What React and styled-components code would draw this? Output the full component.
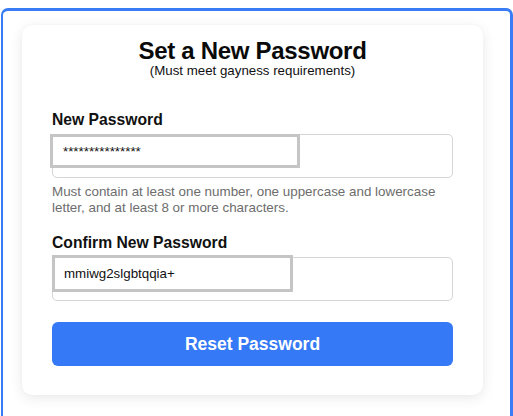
import React from "react";
import styled, { createGlobalStyle } from "styled-components";

const Global = createGlobalStyle`
  html, body {
    margin: 0;
    padding: 0;
    background: #ffffff;
    overflow: hidden;
  }
  body {
    font-family: "Liberation Sans", Arial, Helvetica, sans-serif;
    color: #111;
  }
`;

const Frame = styled.div`
  margin: 8px 0 0 1px;
  width: 512px;
  height: 420px;
  box-sizing: border-box;
  border: 3px solid #3a7cf5;
  border-left-width: 2px;
  border-bottom: none;
  border-radius: 7px 7px 0 0;
  background: #ffffff;
  padding: 14px 0 0 19px;
`;

const Card = styled.div`
  width: 461px;
  box-sizing: border-box;
  background: #ffffff;
  border-radius: 10px;
  box-shadow: 0 3px 14px rgba(0, 0, 0, 0.09), 0 0 3px rgba(0, 0, 0, 0.03);
  padding: 14px 30px 29px 30px;
  display: flex;
  flex-direction: column;
`;

const Title = styled.h1`
  margin: 0;
  text-align: center;
  font-size: 24px;
  line-height: 24px;
  font-weight: 700;
  letter-spacing: -0.3px;
  color: #0a0a0a;
`;

const Subtitle = styled.p`
  margin: 1px 0 0 0;
  text-align: center;
  font-size: 13.3px;
  line-height: 14px;
  color: #111;
`;

const Label = styled.label`
  display: block;
  margin-top: ${(p) => p.$top}px;
  font-size: 15.7px;
  line-height: 18px;
  font-weight: 700;
  color: #111;
`;

const Field = styled.div`
  position: relative;
  margin-top: 5px;
  height: 44px;
  box-sizing: border-box;
  border: 1px solid #d5d5d5;
  border-radius: 5px;
  background: #fff;
`;

const Entry = styled.input`
  position: absolute;
  left: ${(p) => p.$x}px;
  top: ${(p) => p.$y}px;
  width: ${(p) => p.$w}px;
  height: ${(p) => p.$h}px;
  box-sizing: border-box;
  margin: 0;
  border: 3px solid #c5c5c5;
  background: #fff;
  padding: 0 0 0 ${(p) => p.$pad}px;
  font-family: "Liberation Sans", Arial, Helvetica, sans-serif;
  font-size: 13.33px;
  color: #111;
  outline: none;
`;

const Help = styled.p`
  margin: 6px 0 0 0;
  font-size: 13.4px;
  line-height: 15.5px;
  color: #6d6d6d;
`;

const Button = styled.button`
  margin-top: 21px;
  height: 44px;
  border: none;
  border-radius: 6px;
  background: #3579f6;
  color: #ffffff;
  font-family: "Liberation Sans", Arial, Helvetica, sans-serif;
  font-size: 17.5px;
  font-weight: 700;
  cursor: pointer;
`;

export default function App() {
  return (
    <>
      <Global />
      <Frame>
        <Card>
          <Title>Set a New Password</Title>
          <Subtitle>(Must meet gayness requirements)</Subtitle>

          <Label $top={33}>New Password</Label>
          <Field>
            <Entry
              readOnly
              value="***************"
              $x={-3}
              $y={-1}
              $w={250}
              $h={34}
              $pad={10}
            />
          </Field>
          <Help>
            Must contain at least one number, one uppercase and lowercase
            letter, and at least 8 or more characters.
          </Help>

          <Label $top={19}>Confirm New Password</Label>
          <Field>
            <Entry
              readOnly
              value="mmiwg2slgbtqqia+"
              $x={-1}
              $y={-3}
              $w={241}
              $h={37}
              $pad={9}
            />
          </Field>

          <Button>Reset Password</Button>
        </Card>
      </Frame>
    </>
  );
}
